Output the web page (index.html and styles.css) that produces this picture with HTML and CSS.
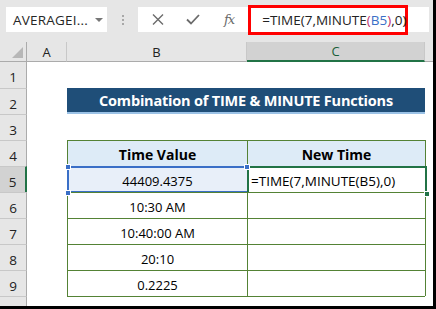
FILE: index.html
```html
<!DOCTYPE html>
<html>
<head>
<meta charset="utf-8">
<link rel="stylesheet" href="styles.css">
</head>
<body>
<div class="screen">
  <div class="fbar">
    <div class="namebox"><span class="nb-text">AVERAGEI...</span><span class="nb-arrow"></span></div>
    <div class="dots"><i></i><i></i><i></i></div>
    <div class="fbox">
      <span class="ico ico-x"><svg width="12" height="11" viewBox="0 0 12 11"><path d="M1 0.5 L11 10.5 M11 0.5 L1 10.5" stroke="#6b6b6b" stroke-width="1.4" fill="none"/></svg></span>
      <span class="ico ico-check"><svg width="14" height="11" viewBox="0 0 14 11"><path d="M1 5.5 L5 9.5 L13 1" stroke="#6b6b6b" stroke-width="1.8" fill="none"/></svg></span>
      <span class="fx">fx</span>
      <div class="redbox"><span class="ftext">=TIME(7,MINUTE<span class="paren">(</span><span class="ref">B5</span><span class="paren">)</span>,0)</span></div>
    </div>
  </div>
  <div class="sheet">
    <!-- column headers -->
    <div class="corner"><span class="tri"></span></div>
    <div class="ch">A</div>
    <div class="ch">B</div>
    <div class="ch ch-sel">C</div>
    <div class="ch ch-rest"></div>

    <!-- row 1 -->
    <div class="rh rh-first">1</div>
    <div class="c"></div><div class="c"></div><div class="c"></div><div class="c"></div>

    <!-- row 2 -->
    <div class="rh">2</div>
    <div class="c"></div>
    <div class="title">Combination of TIME &amp; MINUTE Functions</div>
    <div class="c"></div>

    <!-- row 3 -->
    <div class="rh">3</div>
    <div class="c"></div><div class="c"></div><div class="c"></div><div class="c"></div>

    <!-- row 4 -->
    <div class="rh">4</div>
    <div class="c"></div>
    <div class="c t thead">Time Value</div>
    <div class="c t thead">New Time</div>
    <div class="c tend"></div>

    <!-- row 5 -->
    <div class="rh rh-sel">5</div>
    <div class="c"></div>
    <div class="c t ref-cell">44409.4375<span class="refbox"></span><span class="h h-tl"></span><span class="h h-bl"></span><span class="h h-tr"></span></div>
    <div class="c t act">=TIME(7,MINUTE(B5),0)<span class="actbox"></span><span class="h h-br"></span></div>
    <div class="c tend"></div>

    <!-- row 6 -->
    <div class="rh">6</div>
    <div class="c"></div>
    <div class="c t">10:30 AM</div>
    <div class="c t"></div>
    <div class="c tend"></div>

    <!-- row 7 -->
    <div class="rh">7</div>
    <div class="c"></div>
    <div class="c t">10:40:00 AM</div>
    <div class="c t"></div>
    <div class="c tend"></div>

    <!-- row 8 -->
    <div class="rh">8</div>
    <div class="c"></div>
    <div class="c t">20:10</div>
    <div class="c t"></div>
    <div class="c tend"></div>

    <!-- row 9 -->
    <div class="rh">9</div>
    <div class="c"></div>
    <div class="c t">0.2225</div>
    <div class="c t"></div>
    <div class="c tend"></div>

    <!-- row 10 -->
    <div class="rh"></div>
    <div class="c"></div>
    <div class="c tbot"></div>
    <div class="c tbot"></div>
    <div class="c"></div>
  </div>
</div>
</body>
</html>
```
FILE: styles.css
```css
* { box-sizing: border-box; }
html, body { margin: 0; padding: 0; }
body {
  background: #000;
  width: 436px;
  height: 309px;
  overflow: hidden;
  font-family: "Open Sans", "Noto Sans", sans-serif;
}
.screen {
  width: 433px;
  height: 306px;
  background: #fff;
  display: flex;
  flex-direction: column;
  overflow: hidden;
}
.fbar {
  height: 42px;
  background: #e6e6e6;
  display: flex;
  align-items: flex-start;
  padding: 7px 4px 0 6px;
  flex: none;
}
.namebox {
  width: 101px;
  height: 25px;
  background: #fff;
  display: flex;
  align-items: center;
  padding-left: 7px;
  position: relative;
}
.nb-text {
  font-size: 13.5px;
  color: #262626;
  letter-spacing: 0.2px;
}
.nb-arrow {
  position: absolute;
  left: 89px;
  top: 11px;
  width: 0;
  height: 0;
  border-left: 4px solid transparent;
  border-right: 4px solid transparent;
  border-top: 4px solid #777;
}
.dots {
  width: 31px;
  height: 25px;
  display: flex;
  flex-direction: column;
  align-items: center;
  justify-content: center;
  gap: 2px;
}
.dots i {
  width: 2px;
  height: 2px;
  background: #a8a8a8;
}
.fbox {
  flex: 1;
  height: 25px;
  background: #fff;
  display: flex;
  align-items: center;
}
.ico { display: flex; align-items: center; justify-content: center; }
.ico-x { margin-left: 14px; width: 12px; }
.ico-check { margin-left: 22px; width: 14px; }
.fx {
  margin-left: 24px;
  font-family: "DejaVu Serif", "Liberation Serif", serif;
  font-style: italic;
  font-size: 13px;
  color: #6b6b6b;
  letter-spacing: -1px;
}
.redbox {
  margin-left: 14px;
  width: 160px;
  height: 30px;
  border: 3px solid #ff0000;
  display: flex;
  align-items: center;
  padding-left: 11px;
  flex: none;
}
.ftext {
  font-size: 13.5px;
  color: #222;
  white-space: nowrap;
}
.ftext .ref { color: #3a6fc7; }
.ftext .paren { color: #c0306e; }

.sheet {
  flex: 1;
  display: grid;
  grid-template-columns: 27px 40px 180px 178px 8px;
  grid-template-rows: 20px repeat(9, 26px) 1fr;
  background: #fff;
}
.corner {
  background: #e6e6e6;
  border-right: 1px solid #ababab;
  border-bottom: 1px solid #ababab;
  position: relative;
}
.tri {
  position: absolute;
  right: 3px;
  bottom: 3px;
  width: 0;
  height: 0;
  border-left: 11px solid transparent;
  border-bottom: 11px solid #b7b7b7;
}
.ch {
  background: #e6e6e6;
  border-bottom: 1px solid #ababab;
  border-right: 1px solid #c8c8c8;
  display: flex;
  align-items: center;
  justify-content: center;
  font-size: 13px;
  color: #222;
}
.ch-sel {
  background: #d2d2d2;
  border-bottom: 2px solid #217346;
  color: #185f38;
}
.ch-rest { border-right: none; }
.rh {
  background: #e6e6e6;
  border-right: 1px solid #ababab;
  border-top: 1px solid #c8c8c8;
  display: flex;
  align-items: center;
  justify-content: center;
  font-size: 13.5px;
  color: #222;
  padding-top: 4px;
}
.rh-first { border-top: none; }
.rh-sel {
  background: #d2d2d2;
  border-right: 2px solid #217346;
}
.c {
  background: #fff;
}
.title {
  grid-column: 3 / 5;
  background: #1f4e78;
  border-top: 0;
  border-bottom: 2px solid #9bc2e6;
  color: #fff;
  font-weight: 700;
  font-size: 14.5px;
  display: flex;
  align-items: center;
  justify-content: center;
  letter-spacing: -0.2px;
}
.t {
  border-left: 1px solid #548235;
  border-top: 1px solid #548235;
  display: flex;
  align-items: center;
  justify-content: center;
  font-size: 13px;
  color: #000;
  position: relative;
  padding-top: 2px;
}
.thead {
  background: #ddebf7;
  font-weight: 700;
  font-size: 14px;
}
.tend { border-left: 1px solid #548235; }
.tbot { border-top: 1px solid #548235; }
.ref-cell { background: #e8eff9; }
.act {
  justify-content: flex-start;
  padding-left: 3px;
  font-size: 13.5px;
}
.refbox {
  position: absolute;
  left: -1px;
  top: -1px;
  right: 0;
  bottom: -1px;
  border-left: 2px solid #3a6fc7;
  border-top: 2px solid #3a6fc7;
  border-bottom: 2px solid #3a6fc7;
}
.actbox {
  position: absolute;
  left: -1px;
  top: -1px;
  right: -2px;
  bottom: -2px;
  border: 2px solid #217346;
}
.h {
  position: absolute;
  z-index: 2;
  width: 6px;
  height: 6px;
  border: 1px solid #fff;
}
.h-tl { left: -3px; top: -3px; background: #3a6fc7; }
.h-bl { left: -3px; bottom: -4px; background: #3a6fc7; }
.h-tr { right: -3px; top: -3px; background: #3a6fc7; }
.h-br { right: -5px; bottom: -5px; background: #217346; }
```
